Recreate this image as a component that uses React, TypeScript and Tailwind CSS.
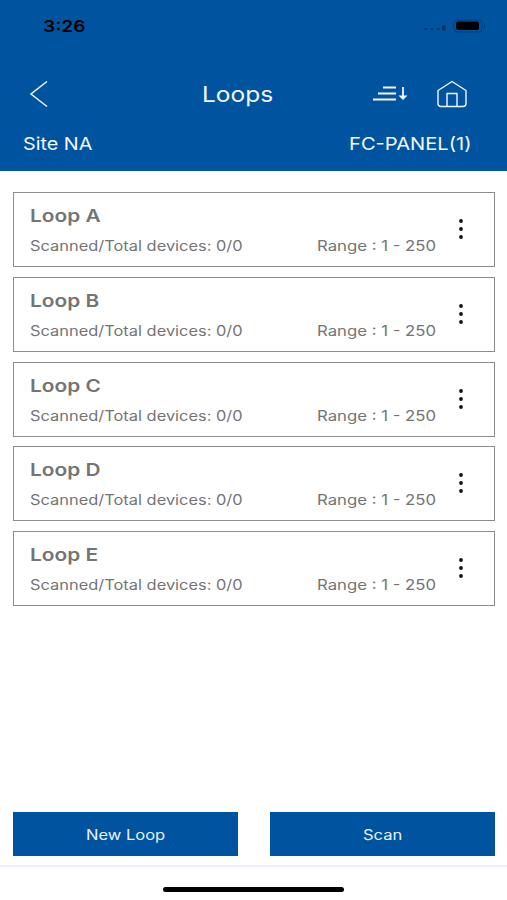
const loops = ["Loop A", "Loop B", "Loop C", "Loop D", "Loop E"];

function Dots() {
  return (
    <svg width="6" height="22" viewBox="0 0 6 22" fill="#111">
      <circle cx="3" cy="3" r="1.9" />
      <circle cx="3" cy="11" r="1.9" />
      <circle cx="3" cy="19" r="1.9" />
    </svg>
  );
}

function LoopCard({ name }: { name: string }) {
  return (
    <li className="flex h-[75px] items-start border border-[#8c8c8c] pl-[15.500px] text-[#747474]">
      <div className="w-[287px] pt-[11px]">
        <h2 className="w-max origin-left scale-x-[1.19] text-[17.5px] leading-6 font-semibold">{name}</h2>
        <p className="mt-[8px] w-max origin-left scale-x-[1.172] text-[14px] leading-5">Scanned/Total devices: 0/0</p>
      </div>
      <div className="w-[141px] pt-[43px]">
        <p className="w-max origin-left scale-x-[1.195] text-[14px] leading-5">Range : 1 - 250</p>
      </div>
      <button className="mt-[25px]" aria-label="Options">
        <Dots />
      </button>
    </li>
  );
}

export default function App() {
  return (
    <div className="flex h-[900px] w-[507px] flex-col overflow-hidden bg-white font-['Inter',sans-serif]">
      <header className="flex h-[171px] flex-col bg-[#00539f] text-[#f2f8ff]">
        <div className="flex h-[52px] items-center justify-between pr-[20px] pl-[43px] text-black">
          <span className="origin-left scale-x-[1.16] text-[16.5px] leading-6 font-semibold">3:26</span>
          <svg width="64" height="16" viewBox="0 0 64 16">
            <g fill="#003b78">
              <rect x="1" y="10" width="4" height="2" rx="1" />
              <rect x="7" y="10" width="4" height="2" rx="1" />
              <rect x="13" y="10" width="4" height="2" rx="1" />
            </g>
            <rect x="19" y="7.5" width="3.6" height="5" rx="1" fill="#002c60" />
            <rect x="31" y="2" width="28" height="12" rx="3.5" fill="none" stroke="#003f80" />
            <rect x="33" y="3.5" width="23" height="8.5" rx="2" fill="#000" />
            <path d="M61 6q2 2 0 4z" fill="#002c60" />
          </svg>
        </div>
        <div className="flex h-[84px] items-center pr-[40px] pl-[29px]">
          <svg width="20" height="28" viewBox="0 0 20 28" fill="none" stroke="currentColor" strokeWidth="1.5">
            <path d="M18 1.5 2 14l16 12.5" />
          </svg>
          <h1 className="ml-[153px] w-[171px]">
            <span className="inline-block origin-left scale-x-[1.14] text-[21.5px] leading-7">Loops</span>
          </h1>
          <svg width="35" height="18" viewBox="0 0 35 18" fill="none" stroke="currentColor" strokeWidth="1.8">
            <path d="M10 2.500h13M5 8.500h18M0 14.500h23M30 2v10" />
            <path d="M25.5 10.500h9L30 15z" fill="currentColor" stroke="none" />
          </svg>
          <svg className="ml-[29px]" width="30" height="28" viewBox="0 0 30 28" fill="none" stroke="currentColor" strokeWidth="1.4" strokeLinejoin="round">
            <path d="M1 10.5 15 1.5l14 9V23.500q0 3-3 3H4q-3 0-3-3z" />
            <path d="M10 26.500V13.500h10V26.500" />
          </svg>
        </div>
        <div className="flex justify-between pt-px pr-[35px] pl-[23px] text-[17.5px] leading-[14px]">
          <span className="origin-left scale-x-[1.13]">Site NA</span>
          <span className="origin-right scale-x-[1.15]">FC-PANEL(1)</span>
        </div>
      </header>
      <ul className="mr-[12px] ml-[13px] mt-[21px] flex flex-col gap-[9.800px]">
        {loops.map((name) => (
          <LoopCard key={name} name={name} />
        ))}
      </ul>
      <div className="mt-auto flex justify-between pr-[12px] pb-[9px] pl-[13px] text-[14px] text-[#e8f2ff]">
        <button className="h-[44px] w-[225px] bg-[#00539f]">
          <span className="inline-block scale-x-[1.18]">New Loop</span>
        </button>
        <button className="h-[44px] w-[225px] bg-[#00539f]">
          <span className="inline-block scale-x-[1.18]">Scan</span>
        </button>
      </div>
      <footer className="flex h-[35px] justify-center border-t-2 border-[#edf0fc] pt-[20px]">
        <div className="h-[5px] w-[181px] rounded-full bg-black" />
      </footer>
    </div>
  );
}
